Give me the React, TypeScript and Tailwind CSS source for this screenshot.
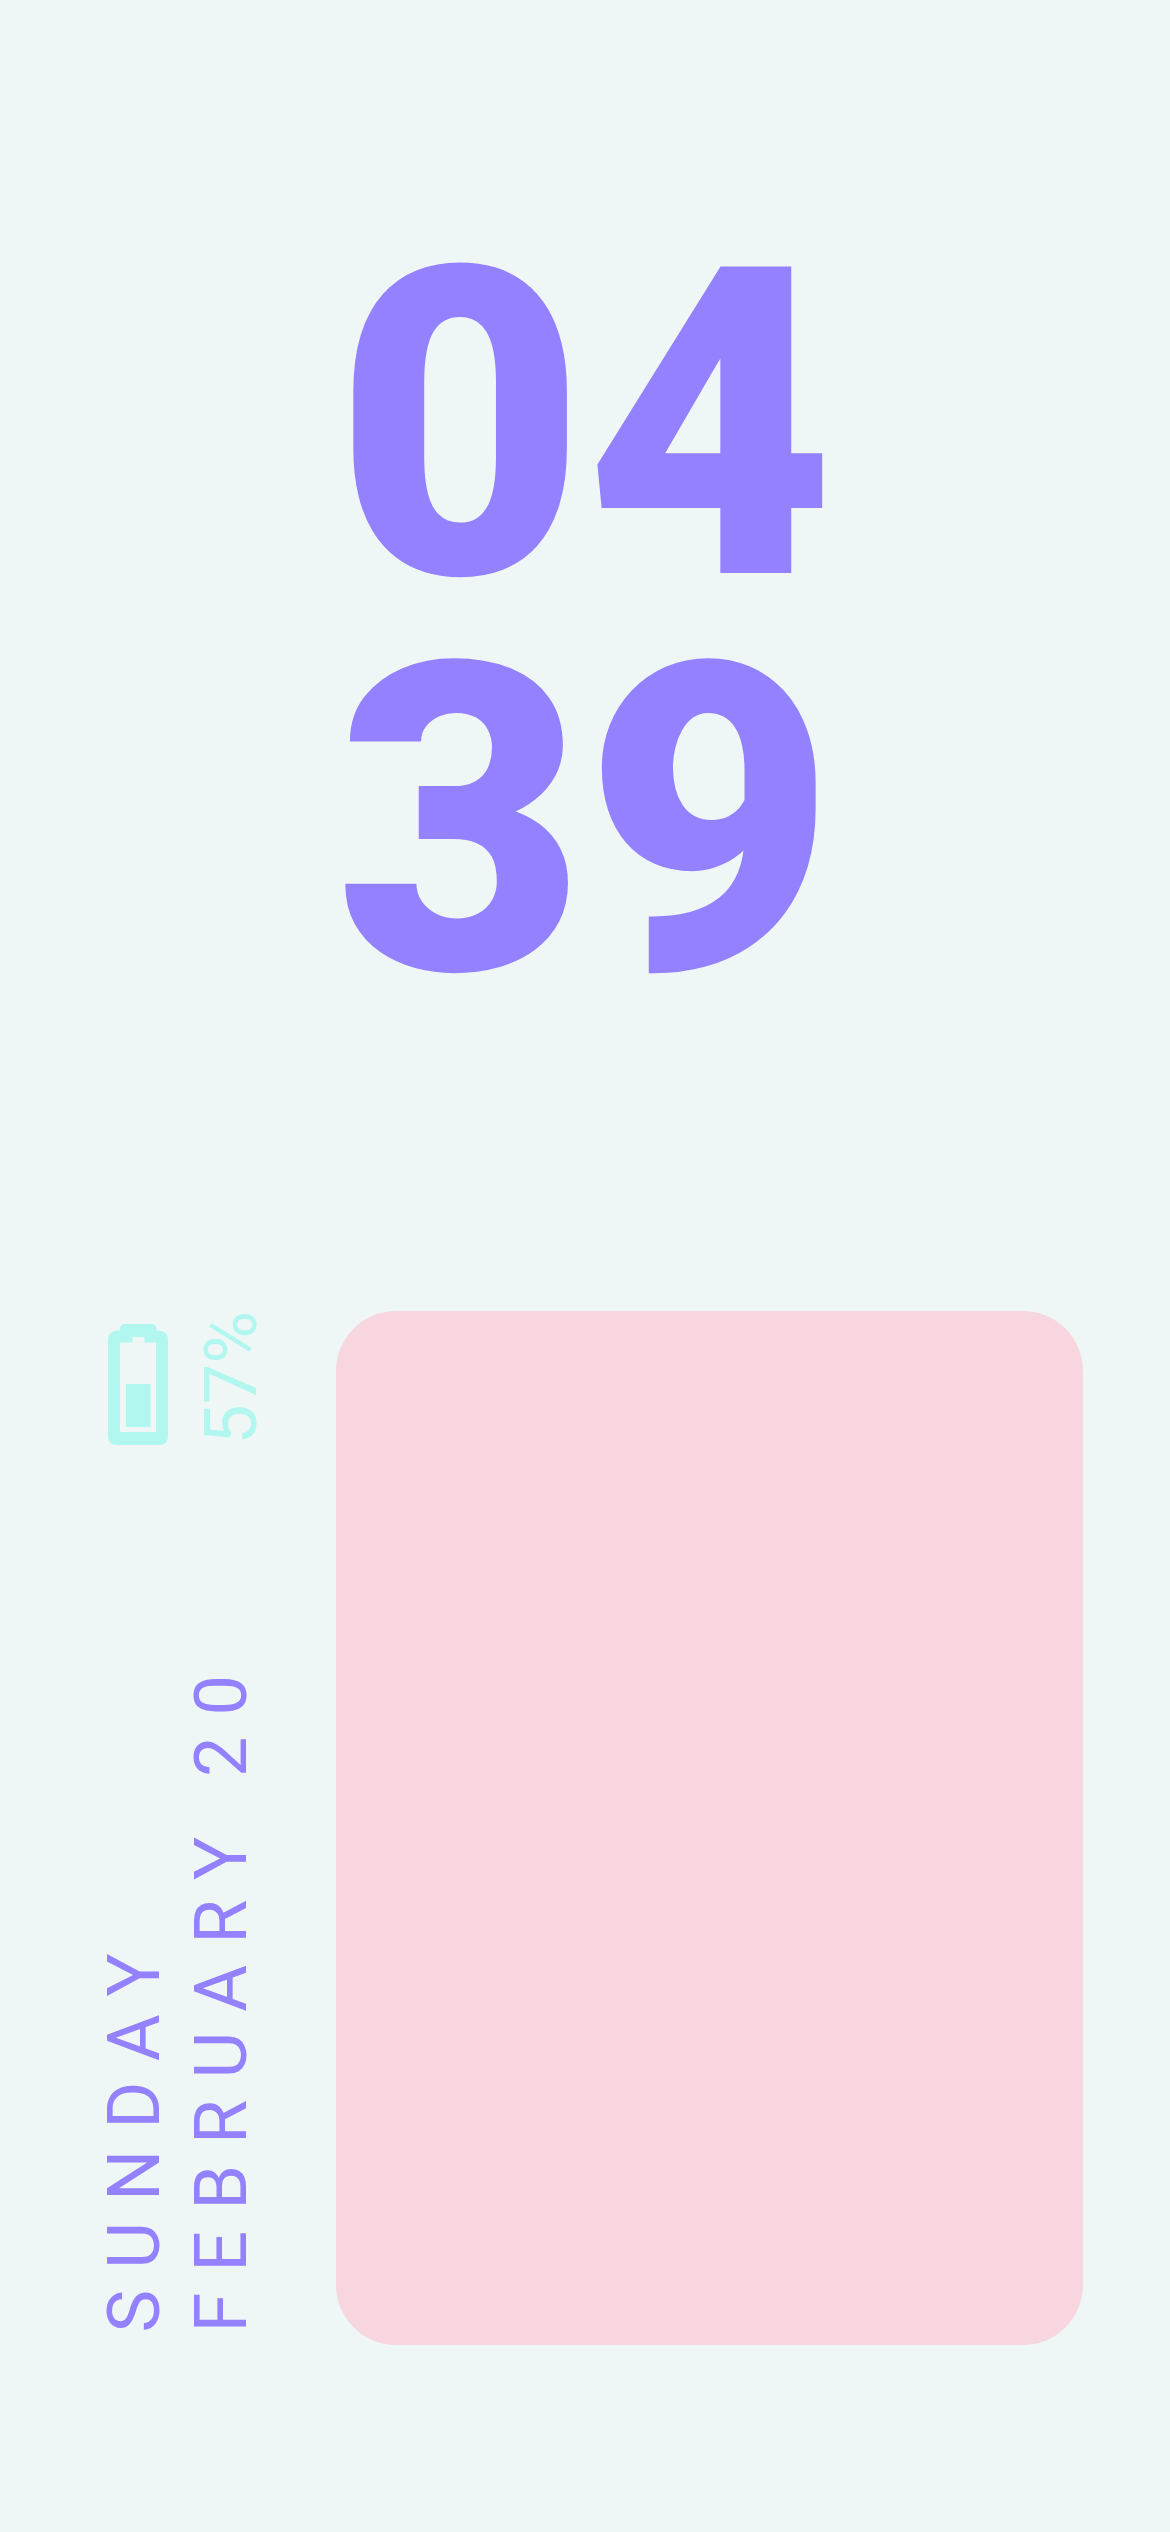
export default function App() {
  return (
    <main className="flex min-h-screen flex-col bg-[#eff7f6] font-['Roboto',sans-serif] text-[#9381ff]">
      <time className="flex flex-col items-center pt-[228px] text-[431px] leading-[396px] font-black">
        <span>04</span>
        <span>39</span>
      </time>
      <section className="mt-[291px] flex h-[1034px] pr-[87px] pl-[91px]">
        <aside className="flex w-[245px] shrink-0 flex-col justify-between pb-3 text-[72px] leading-[87px]">
          <div className="flex items-start gap-5 pl-[17px] text-[#b2f7ef]">
            <svg
              viewBox="0 0 60 121"
              className="mt-[13px] h-[121px] w-[60px]"
              fill="currentColor"
              role="img"
              aria-label="Battery level"
            >
              <path
                fillRule="evenodd"
                d="M12 6.5V5Q12 0 17 0H43.5Q48.5 0 48.5 5V6.5H51Q60 7.5 60 15.5V112Q60 121 51 121H9Q0 121 0 112V15.5Q0 7.5 9 6.5ZM12 18.5V108H48V18.5H36.5V13H24.5V18.5Z"
              />
              <path d="M18 60H42.5V103H18Z" />
            </svg>
            <span className="rotate-180 [writing-mode:vertical-rl]">57%</span>
          </div>
          <div className="flex rotate-180 flex-col tracking-[21px] [writing-mode:vertical-rl]">
            <span>SUNDAY</span>
            <span>FEBRUARY 20</span>
          </div>
        </aside>
        <div className="flex-1 rounded-[60px] bg-[#f7d6e0]" />
      </section>
    </main>
  );
}
